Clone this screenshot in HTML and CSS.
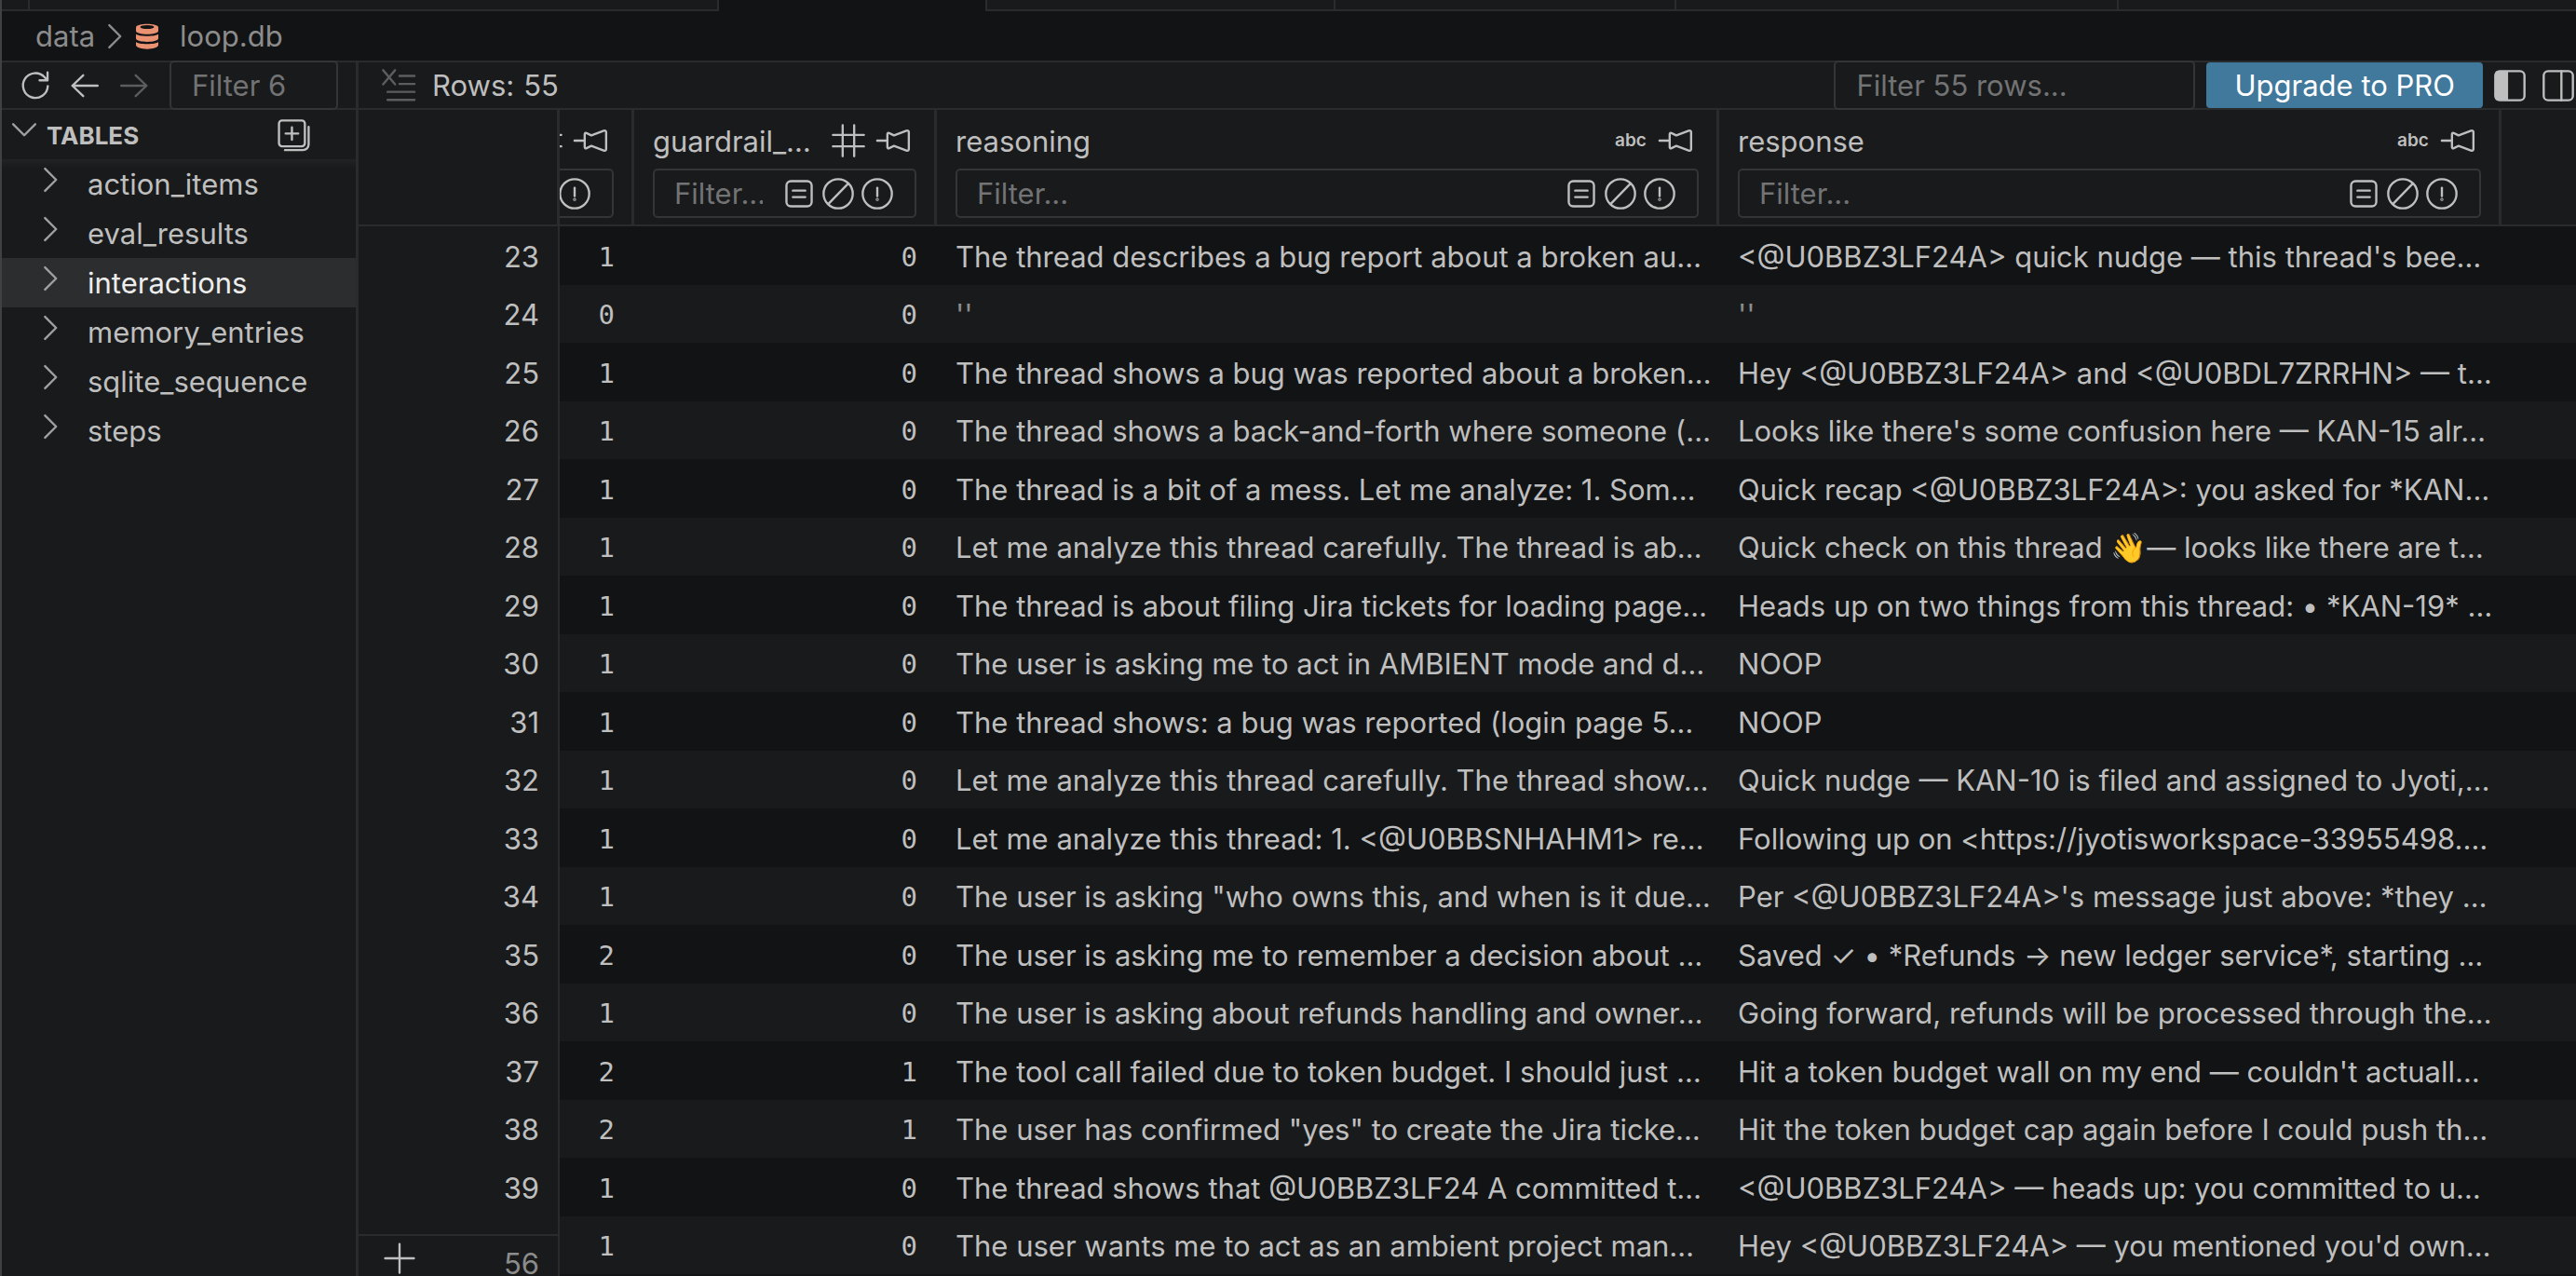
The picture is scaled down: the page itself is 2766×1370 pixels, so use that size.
FILE: index.html
```
<!DOCTYPE html>
<html lang="en">
<head>
    <meta charset="UTF-8">
    <meta name="viewport" content="width=device-width, initial-scale=1.0">
    <title>loop.db</title>
    <link rel="stylesheet" href="styles.css">
</head>
<body>
    <svg class="icon-defs" aria-hidden="true">
        <symbol id="i-right" viewBox="0 0 16 16"><path d="M5.2 3l5 5-5 5"/></symbol>
        <symbol id="i-down" viewBox="0 0 16 16"><path d="M3 5.2l5 5 5-5"/></symbol>
        <symbol id="i-refresh" viewBox="0 0 16 16"><path d="M13.6 8.2a5.6 5.6 0 1 1-1.5-4.1l1.2 1.4M13.5 2v3.6H9.9"/></symbol>
        <symbol id="i-back" viewBox="0 0 16 16"><path d="M13.8 8H2.4M7.3 3.3L2.4 8l4.9 4.7"/></symbol>
        <symbol id="i-forward" viewBox="0 0 16 16"><path d="M2.2 8h11.4M8.7 3.3L13.6 8l-4.9 4.7"/></symbol>
        <symbol id="i-add-table" viewBox="0 0 16 16"><path d="M2.9 1.4h8.9a1.4 1.4 0 0 1 1.4 1.4v8.9a1.4 1.4 0 0 1-1.4 1.4H2.9a1.4 1.4 0 0 1-1.4-1.4V2.8a1.4 1.4 0 0 1 1.4-1.4zM7.35 4.5v5.6M4.5 7.3h5.7M14.9 4.3v7.9a2.6 2.6 0 0 1-2.6 2.6H4.2"/></symbol>
        <symbol id="i-clear" viewBox="0 0 16 16"><path d="M1 1l5.4 6.4M6.4 1L1 7.4M8.4 3.6h6.8M8.4 7.2h6.8M3 10.8h12.2M3 14.4h12.2"/></symbol>
        <symbol id="i-hash" viewBox="0 0 16 16"><path d="M5.4 1v14M10.6 1v14M1 5.4h14M1 10.6h14"/></symbol>
        <symbol id="i-pin" viewBox="0 0 16 16"><path d="M.8 8h4.6M5.4 5.1c0-.5.4-.7.8-.5l2.2 1 5.6-2.1c.7-.2 1.1.1 1.1.7v7.6c0 .6-.4.9-1.1.7l-5.600-2.1-2.2 1c-.4.2-.8 0-.8-.5z"/></symbol>
        <symbol id="i-match" viewBox="0 0 16 16"><rect x="2.3" y="2.3" width="11.4" height="11.4" rx="2"/><path d="M5.2 6.6h5.6M5.2 9.5h5.6"/></symbol>
        <symbol id="i-slash" viewBox="0 0 16 16"><circle cx="8" cy="8" r="6.6"/><path d="M3.6 12.6l8.9-9.2"/></symbol>
        <symbol id="i-alert" viewBox="0 0 16 16"><circle cx="8" cy="8" r="6.6"/><path d="M8 5.3v3.8"/><circle cx="8" cy="10.6" r=".2"/></symbol>
        <symbol id="i-left-panel" viewBox="0 0 16 16"><rect x="1.4" y="1.4" width="13.2" height="13.2" rx="2"/><path class="solid" d="M2 2h4.7v12H2z"/></symbol>
        <symbol id="i-right-panel" viewBox="0 0 16 16"><rect x="1.4" y="1.4" width="13.2" height="13.2" rx="2"/><path d="M9.4 1.4v13.2"/></symbol>
        <symbol id="i-plus" viewBox="0 0 16 16"><path d="M8 1.5v13M1.5 8h13"/></symbol>
    </svg>

    <div class="tabs">
        <div class="tab tab-first"></div>
        <div class="tab tab-wide"></div>
        <div class="tab active"></div>
        <div class="tab tab-mid"></div>
        <div class="tab tab-short"></div>
        <div class="tab tab-long"></div>
        <div class="tab tab-rest"></div>
    </div>

    <nav class="breadcrumb">
        <a href="#">data</a>
        <svg class="icon crumb-arrow"><use href="#i-right"/></svg>
        <svg class="db-icon" viewBox="0 0 24 28">
            <path d="M0 4.500C0-.5 24-.5 24 4.500v3.500C24 13 0 13 0 8z"/>
            <path d="M0 11.500c2 3 22 3 24 0V16.500c-1 4.500-23 4.500-24 0z"/>
            <path d="M0 20c2 3 22 3 24 0v3.500c-1 5.500-23 5.500-24 0z"/>
            <ellipse class="hole" cx="12" cy="4" rx="7.500" ry="2"/>
        </svg>
        <a href="#">loop.db</a>
    </nav>

    <div class="workspace">
        <aside class="sidebar">
            <div class="toolbar">
                <button class="icon-btn" aria-label="Refresh"><svg class="icon"><use href="#i-refresh"/></svg></button>
                <button class="icon-btn" aria-label="Back"><svg class="icon"><use href="#i-back"/></svg></button>
                <button class="icon-btn dim" aria-label="Forward"><svg class="icon"><use href="#i-forward"/></svg></button>
                <input class="box-input" type="text" placeholder="Filter 6" aria-label="Filter tables">
            </div>
            <div class="tables-head">
                <svg class="icon dim-icon"><use href="#i-down"/></svg>
                <h2>TABLES</h2>
                <button class="icon-btn" aria-label="Create table"><svg class="icon"><use href="#i-add-table"/></svg></button>
            </div>
            <ul class="table-list">
                <li><a href="#"><svg class="icon"><use href="#i-right"/></svg>action_items</a></li>
                <li><a href="#"><svg class="icon"><use href="#i-right"/></svg>eval_results</a></li>
                <li class="selected"><a href="#"><svg class="icon"><use href="#i-right"/></svg>interactions</a></li>
                <li><a href="#"><svg class="icon"><use href="#i-right"/></svg>memory_entries</a></li>
                <li><a href="#"><svg class="icon"><use href="#i-right"/></svg>sqlite_sequence</a></li>
                <li><a href="#"><svg class="icon"><use href="#i-right"/></svg>steps</a></li>
            </ul>
        </aside>

        <main class="main">
            <div class="toolbar">
                <button class="icon-btn dim" aria-label="Clear filters"><svg class="icon"><use href="#i-clear"/></svg></button>
                <span class="row-count"><span>Rows:</span><span>55</span></span>
                <input class="box-input" type="text" placeholder="Filter 55 rows..." aria-label="Filter rows">
                <button class="upgrade">Upgrade to PRO</button>
                <button class="icon-btn" aria-label="Toggle left panel"><svg class="icon"><use href="#i-left-panel"/></svg></button>
                <button class="icon-btn" aria-label="Toggle right panel"><svg class="icon"><use href="#i-right-panel"/></svg></button>
            </div>

            <div class="grid">
                <table>
                    <colgroup>
                        <col class="c-num"><col class="c-cut"><col class="c-guard"><col class="c-text"><col class="c-text"><col>
                    </colgroup>
                    <thead>
                        <tr>
                            <th></th>
                            <th>
                                <div class="col-head cut">
                                    <div class="col-title">
                                        <svg class="icon"><use href="#i-hash"/></svg>
                                        <svg class="icon"><use href="#i-pin"/></svg>
                                    </div>
                                    <div class="filter">
                                        <input type="text" aria-label="Filter column">
                                        <button class="icon-btn" aria-label="Exact match"><svg class="icon"><use href="#i-match"/></svg></button>
                                        <button class="icon-btn" aria-label="Is null"><svg class="icon"><use href="#i-slash"/></svg></button>
                                        <button class="icon-btn" aria-label="Not null"><svg class="icon"><use href="#i-alert"/></svg></button>
                                    </div>
                                </div>
                            </th>
                            <th>
                                <div class="col-head">
                                    <div class="col-title">
                                        <span class="name">guardrail_…</span>
                                        <svg class="icon"><use href="#i-hash"/></svg>
                                        <svg class="icon"><use href="#i-pin"/></svg>
                                    </div>
                                    <div class="filter">
                                        <input type="text" placeholder="Filter..." aria-label="Filter guardrail">
                                        <button class="icon-btn" aria-label="Exact match"><svg class="icon"><use href="#i-match"/></svg></button>
                                        <button class="icon-btn" aria-label="Is null"><svg class="icon"><use href="#i-slash"/></svg></button>
                                        <button class="icon-btn" aria-label="Not null"><svg class="icon"><use href="#i-alert"/></svg></button>
                                    </div>
                                </div>
                            </th>
                            <th>
                                <div class="col-head">
                                    <div class="col-title">
                                        <span class="name">reasoning</span>
                                        <span class="type">abc</span>
                                        <svg class="icon"><use href="#i-pin"/></svg>
                                    </div>
                                    <div class="filter">
                                        <input type="text" placeholder="Filter..." aria-label="Filter reasoning">
                                        <button class="icon-btn" aria-label="Exact match"><svg class="icon"><use href="#i-match"/></svg></button>
                                        <button class="icon-btn" aria-label="Is null"><svg class="icon"><use href="#i-slash"/></svg></button>
                                        <button class="icon-btn" aria-label="Not null"><svg class="icon"><use href="#i-alert"/></svg></button>
                                    </div>
                                </div>
                            </th>
                            <th>
                                <div class="col-head">
                                    <div class="col-title">
                                        <span class="name">response</span>
                                        <span class="type">abc</span>
                                        <svg class="icon"><use href="#i-pin"/></svg>
                                    </div>
                                    <div class="filter">
                                        <input type="text" placeholder="Filter..." aria-label="Filter response">
                                        <button class="icon-btn" aria-label="Exact match"><svg class="icon"><use href="#i-match"/></svg></button>
                                        <button class="icon-btn" aria-label="Is null"><svg class="icon"><use href="#i-slash"/></svg></button>
                                        <button class="icon-btn" aria-label="Not null"><svg class="icon"><use href="#i-alert"/></svg></button>
                                    </div>
                                </div>
                            </th>
                            <th class="rest"></th>
                        </tr>
                    </thead>
                    <tbody>
                        <tr><td class="row-id">23</td><td class="num">1</td><td class="num">0</td><td>The thread describes a bug report about a broken au…</td><td>&lt;@U0BBZ3LF24A&gt; quick nudge — this thread's bee…</td><td></td></tr>
                        <tr><td class="row-id">24</td><td class="num">0</td><td class="num">0</td><td class="empty">''</td><td class="empty">''</td><td></td></tr>
                        <tr><td class="row-id">25</td><td class="num">1</td><td class="num">0</td><td>The thread shows a bug was reported about a broken…</td><td>Hey &lt;@U0BBZ3LF24A&gt; and &lt;@U0BDL7ZRRHN&gt; — t…</td><td></td></tr>
                        <tr><td class="row-id">26</td><td class="num">1</td><td class="num">0</td><td>The thread shows a back-and-forth where someone (…</td><td>Looks like there's some confusion here — KAN-15 alr…</td><td></td></tr>
                        <tr><td class="row-id">27</td><td class="num">1</td><td class="num">0</td><td>The thread is a bit of a mess. Let me analyze: 1. Som…</td><td>Quick recap &lt;@U0BBZ3LF24A&gt;: you asked for *KAN…</td><td></td></tr>
                        <tr><td class="row-id">28</td><td class="num">1</td><td class="num">0</td><td>Let me analyze this thread carefully. The thread is ab…</td><td>Quick check on this thread 👋— looks like there are t…</td><td></td></tr>
                        <tr><td class="row-id">29</td><td class="num">1</td><td class="num">0</td><td>The thread is about filing Jira tickets for loading page…</td><td>Heads up on two things from this thread: • *KAN-19* …</td><td></td></tr>
                        <tr><td class="row-id">30</td><td class="num">1</td><td class="num">0</td><td>The user is asking me to act in AMBIENT mode and d…</td><td>NOOP</td><td></td></tr>
                        <tr><td class="row-id">31</td><td class="num">1</td><td class="num">0</td><td>The thread shows: a bug was reported (login page 5…</td><td>NOOP</td><td></td></tr>
                        <tr><td class="row-id">32</td><td class="num">1</td><td class="num">0</td><td>Let me analyze this thread carefully. The thread show…</td><td>Quick nudge — KAN-10 is filed and assigned to Jyoti,…</td><td></td></tr>
                        <tr><td class="row-id">33</td><td class="num">1</td><td class="num">0</td><td>Let me analyze this thread: 1. &lt;@U0BBSNHAHM1&gt; re…</td><td>Following up on &lt;https://jyotisworkspace-33955498.…</td><td></td></tr>
                        <tr><td class="row-id">34</td><td class="num">1</td><td class="num">0</td><td>The user is asking "who owns this, and when is it due…</td><td>Per &lt;@U0BBZ3LF24A&gt;'s message just above: *they …</td><td></td></tr>
                        <tr><td class="row-id">35</td><td class="num">2</td><td class="num">0</td><td>The user is asking me to remember a decision about …</td><td>Saved ✓ • *Refunds → new ledger service*, starting …</td><td></td></tr>
                        <tr><td class="row-id">36</td><td class="num">1</td><td class="num">0</td><td>The user is asking about refunds handling and owner…</td><td>Going forward, refunds will be processed through the…</td><td></td></tr>
                        <tr><td class="row-id">37</td><td class="num">2</td><td class="num">1</td><td>The tool call failed due to token budget. I should just …</td><td>Hit a token budget wall on my end — couldn't actuall…</td><td></td></tr>
                        <tr><td class="row-id">38</td><td class="num">2</td><td class="num">1</td><td>The user has confirmed "yes" to create the Jira ticke…</td><td>Hit the token budget cap again before I could push th…</td><td></td></tr>
                        <tr><td class="row-id">39</td><td class="num">1</td><td class="num">0</td><td>The thread shows that @U0BBZ3LF24 A committed t…</td><td>&lt;@U0BBZ3LF24A&gt; — heads up: you committed to u…</td><td></td></tr>
                        <tr><td class="row-id"></td><td class="num">1</td><td class="num">0</td><td>The user wants me to act as an ambient project man…</td><td>Hey &lt;@U0BBZ3LF24A&gt; — you mentioned you'd own…</td><td></td></tr>
                    </tbody>
                </table>

                <div class="new-row">
                    <button class="icon-btn" aria-label="Add row"><svg class="icon"><use href="#i-plus"/></svg></button>
                    <span>56</span>
                </div>
            </div>
        </main>
    </div>
</body>
</html>
```
FILE: styles.css
```
* {
    margin: 0;
    padding: 0;
    box-sizing: border-box;
}

:root {
    --bg: #121314;
    --panel: #191a1b;
    --line: #2a2b2c;
    --input-line: #333536;
    --text: #bfbfbf;
    --muted: #8c8c8c;
    --placeholder: #727374;
}

body {
    display: flex;
    flex-direction: column;
    height: 100vh;
    overflow: hidden;
    border-left: 2px solid #404142;
    background: var(--bg);
    color: var(--text);
    font-family: Inter, "Open Sans", sans-serif;
    font-size: 31px;
    line-height: 40px;
}

a {
    color: inherit;
    text-decoration: none;
}

button, input {
    font: inherit;
    color: inherit;
    background: none;
    border: none;
    outline: none;
}

input::placeholder {
    color: var(--placeholder);
    opacity: 1;
}

/* icons */
.icon-defs {
    display: none;
}

.icon {
    width: 38px;
    height: 38px;
    flex: none;
    display: block;
    fill: none;
    stroke: currentColor;
    stroke-width: 1;
    stroke-linecap: round;
    stroke-linejoin: round;
}

.solid {
    fill: currentColor;
}

.icon-btn {
    flex: none;
    cursor: pointer;
}

.dim {
    color: #5c5d5e;
}

/* tabs */
.tabs {
    display: flex;
    flex: none;
    height: 12px;
}

.tab {
    flex: none;
    background: var(--panel);
    border-right: 2px solid var(--line);
    border-bottom: 2px solid var(--line);
}

.tab.active {
    width: 288px;
    background: var(--bg);
    border-bottom: none;
}

.tab-first {
    width: 30px;
}

.tab-wide {
    width: 740px;
}

.tab-mid {
    width: 374px;
}

.tab-short {
    width: 366px;
}

.tab-long {
    width: 475px;
}

.tab-rest {
    flex: 1;
    border-right: none;
}

/* breadcrumb */
.breadcrumb {
    display: flex;
    align-items: center;
    flex: none;
    height: 53px;
    padding-left: 36px;
    color: var(--muted);
}

.crumb-arrow {
    margin: 0 3px;
}

.db-icon {
    width: 24px;
    height: 28px;
    margin-right: 23px;
    fill: #ea9272;
}

.db-icon .hole {
    fill: var(--bg);
}

/* layout */
.workspace {
    display: flex;
    flex: 1;
    min-height: 0;
}

.sidebar {
    display: flex;
    flex-direction: column;
    flex: none;
    width: 383px;
    background: var(--panel);
    border-right: 3px solid var(--line);
}

.main {
    display: flex;
    flex-direction: column;
    flex: 1;
    min-width: 0;
}

.toolbar {
    display: flex;
    align-items: center;
    flex: none;
    height: 53px;
    background: var(--panel);
    box-shadow: inset 0 2px var(--line), inset 0 -2px var(--line);
}

.box-input {
    height: 53px;
    min-width: 0;
    padding: 0 22px;
    background: var(--panel);
    border: 2px solid var(--input-line);
    border-radius: 5px;
}

.sidebar .toolbar {
    gap: 15px;
    padding: 0 19px 0 17px;
}

.sidebar .box-input {
    flex: 1;
    margin-left: 4px;
}

.main .toolbar {
    padding-left: 24px;
}

.row-count {
    display: flex;
    gap: 10px;
    margin: 0 auto 0 17px;
}

.main .box-input {
    width: 388px;
}

.upgrade {
    height: 49px;
    margin: 0 10px 0 12px;
    padding: 0 30px;
    background: #41799d;
    border-radius: 4px;
    color: #fff;
    cursor: pointer;
}

.main .toolbar .icon-btn + .icon-btn {
    margin-left: 14px;
}

/* table list */
.tables-head {
    display: flex;
    align-items: center;
    flex: none;
    height: 53px;
    padding: 0 48px 0 5px;
}

.tables-head h2 {
    flex: 1;
    margin-left: 5px;
    padding-top: 2px;
    font-size: 26px;
    font-weight: 700;
}

.dim-icon,
.table-list .icon {
    color: #a0a0a0;
    margin-bottom: 10px;
}

.table-list {
    flex: 1;
    list-style: none;
    background: linear-gradient(#222324, var(--panel) 9px);
}

.table-list a {
    display: flex;
    align-items: center;
    gap: 20px;
    height: 53px;
    padding-left: 34px;
}

.table-list .selected {
    background: #2c2d2e;
    color: #ededed;
}

/* data grid */
.grid {
    position: relative;
    flex: 1;
    min-height: 0;
    overflow: hidden;
}

table {
    width: 100%;
    table-layout: fixed;
    border-collapse: separate;
    border-spacing: 0;
}

.c-num {
    width: 216px;
}

.c-cut {
    width: 80px;
}

.c-guard {
    width: 325px;
}

.c-text {
    width: 840px;
}

th {
    background: var(--panel);
    border-right: 3px solid var(--line);
    border-bottom: 2px solid var(--line);
    font-weight: 400;
    text-align: left;
}

th.rest {
    border-right: none;
}

.col-head {
    height: 123px;
    padding: 0 19px 7px 20px;
    overflow: hidden;
}

.col-title {
    display: flex;
    align-items: center;
    gap: 10px;
    height: 63px;
    padding: 2px 6px 0 0;
}

.col-title .name {
    flex: 1;
    padding-top: 2px;
    white-space: nowrap;
}

.type {
    width: 38px;
    font-size: 19px;
    font-weight: 600;
    line-height: 38px;
    text-align: center;
}

.filter {
    display: flex;
    align-items: center;
    gap: 4px;
    height: 53px;
    padding: 0 21px;
    border: 2px solid var(--input-line);
    border-radius: 5px;
}

.filter input {
    flex: 1;
    min-width: 0;
    margin-right: 16px;
}

/* column scrolled under the row numbers, only its right end shows */
.cut {
    display: flex;
    flex-direction: column;
    align-items: flex-end;
    padding-left: 0;
}

.cut .filter {
    flex: none;
    width: 284px;
}

td {
    height: 62px;
    padding: 2px 16px 0 20px;
    overflow: hidden;
    white-space: nowrap;
}

tr:nth-child(odd) td {
    height: 63px;
}

tbody tr:nth-child(even) {
    background: var(--panel);
}

td.num {
    padding-right: 21px;
    font-family: "DejaVu Sans Mono", monospace;
    font-size: 29px;
    text-align: right;
}

td.row-id {
    padding-right: 20px;
    background: var(--panel);
    border-right: 2px solid var(--line);
    text-align: right;
}

td.empty {
    color: var(--muted);
}

.new-row {
    position: absolute;
    left: 0;
    bottom: 0;
    display: flex;
    justify-content: space-between;
    align-items: flex-end;
    width: 216px;
    height: 45px;
    padding: 0 20px 0 25px;
    background: var(--panel);
    border-top: 2px solid var(--line);
    border-right: 2px solid var(--line);
    color: var(--muted);
    line-height: 26px;
}

.new-row .icon-btn {
    color: var(--text);
}
```
